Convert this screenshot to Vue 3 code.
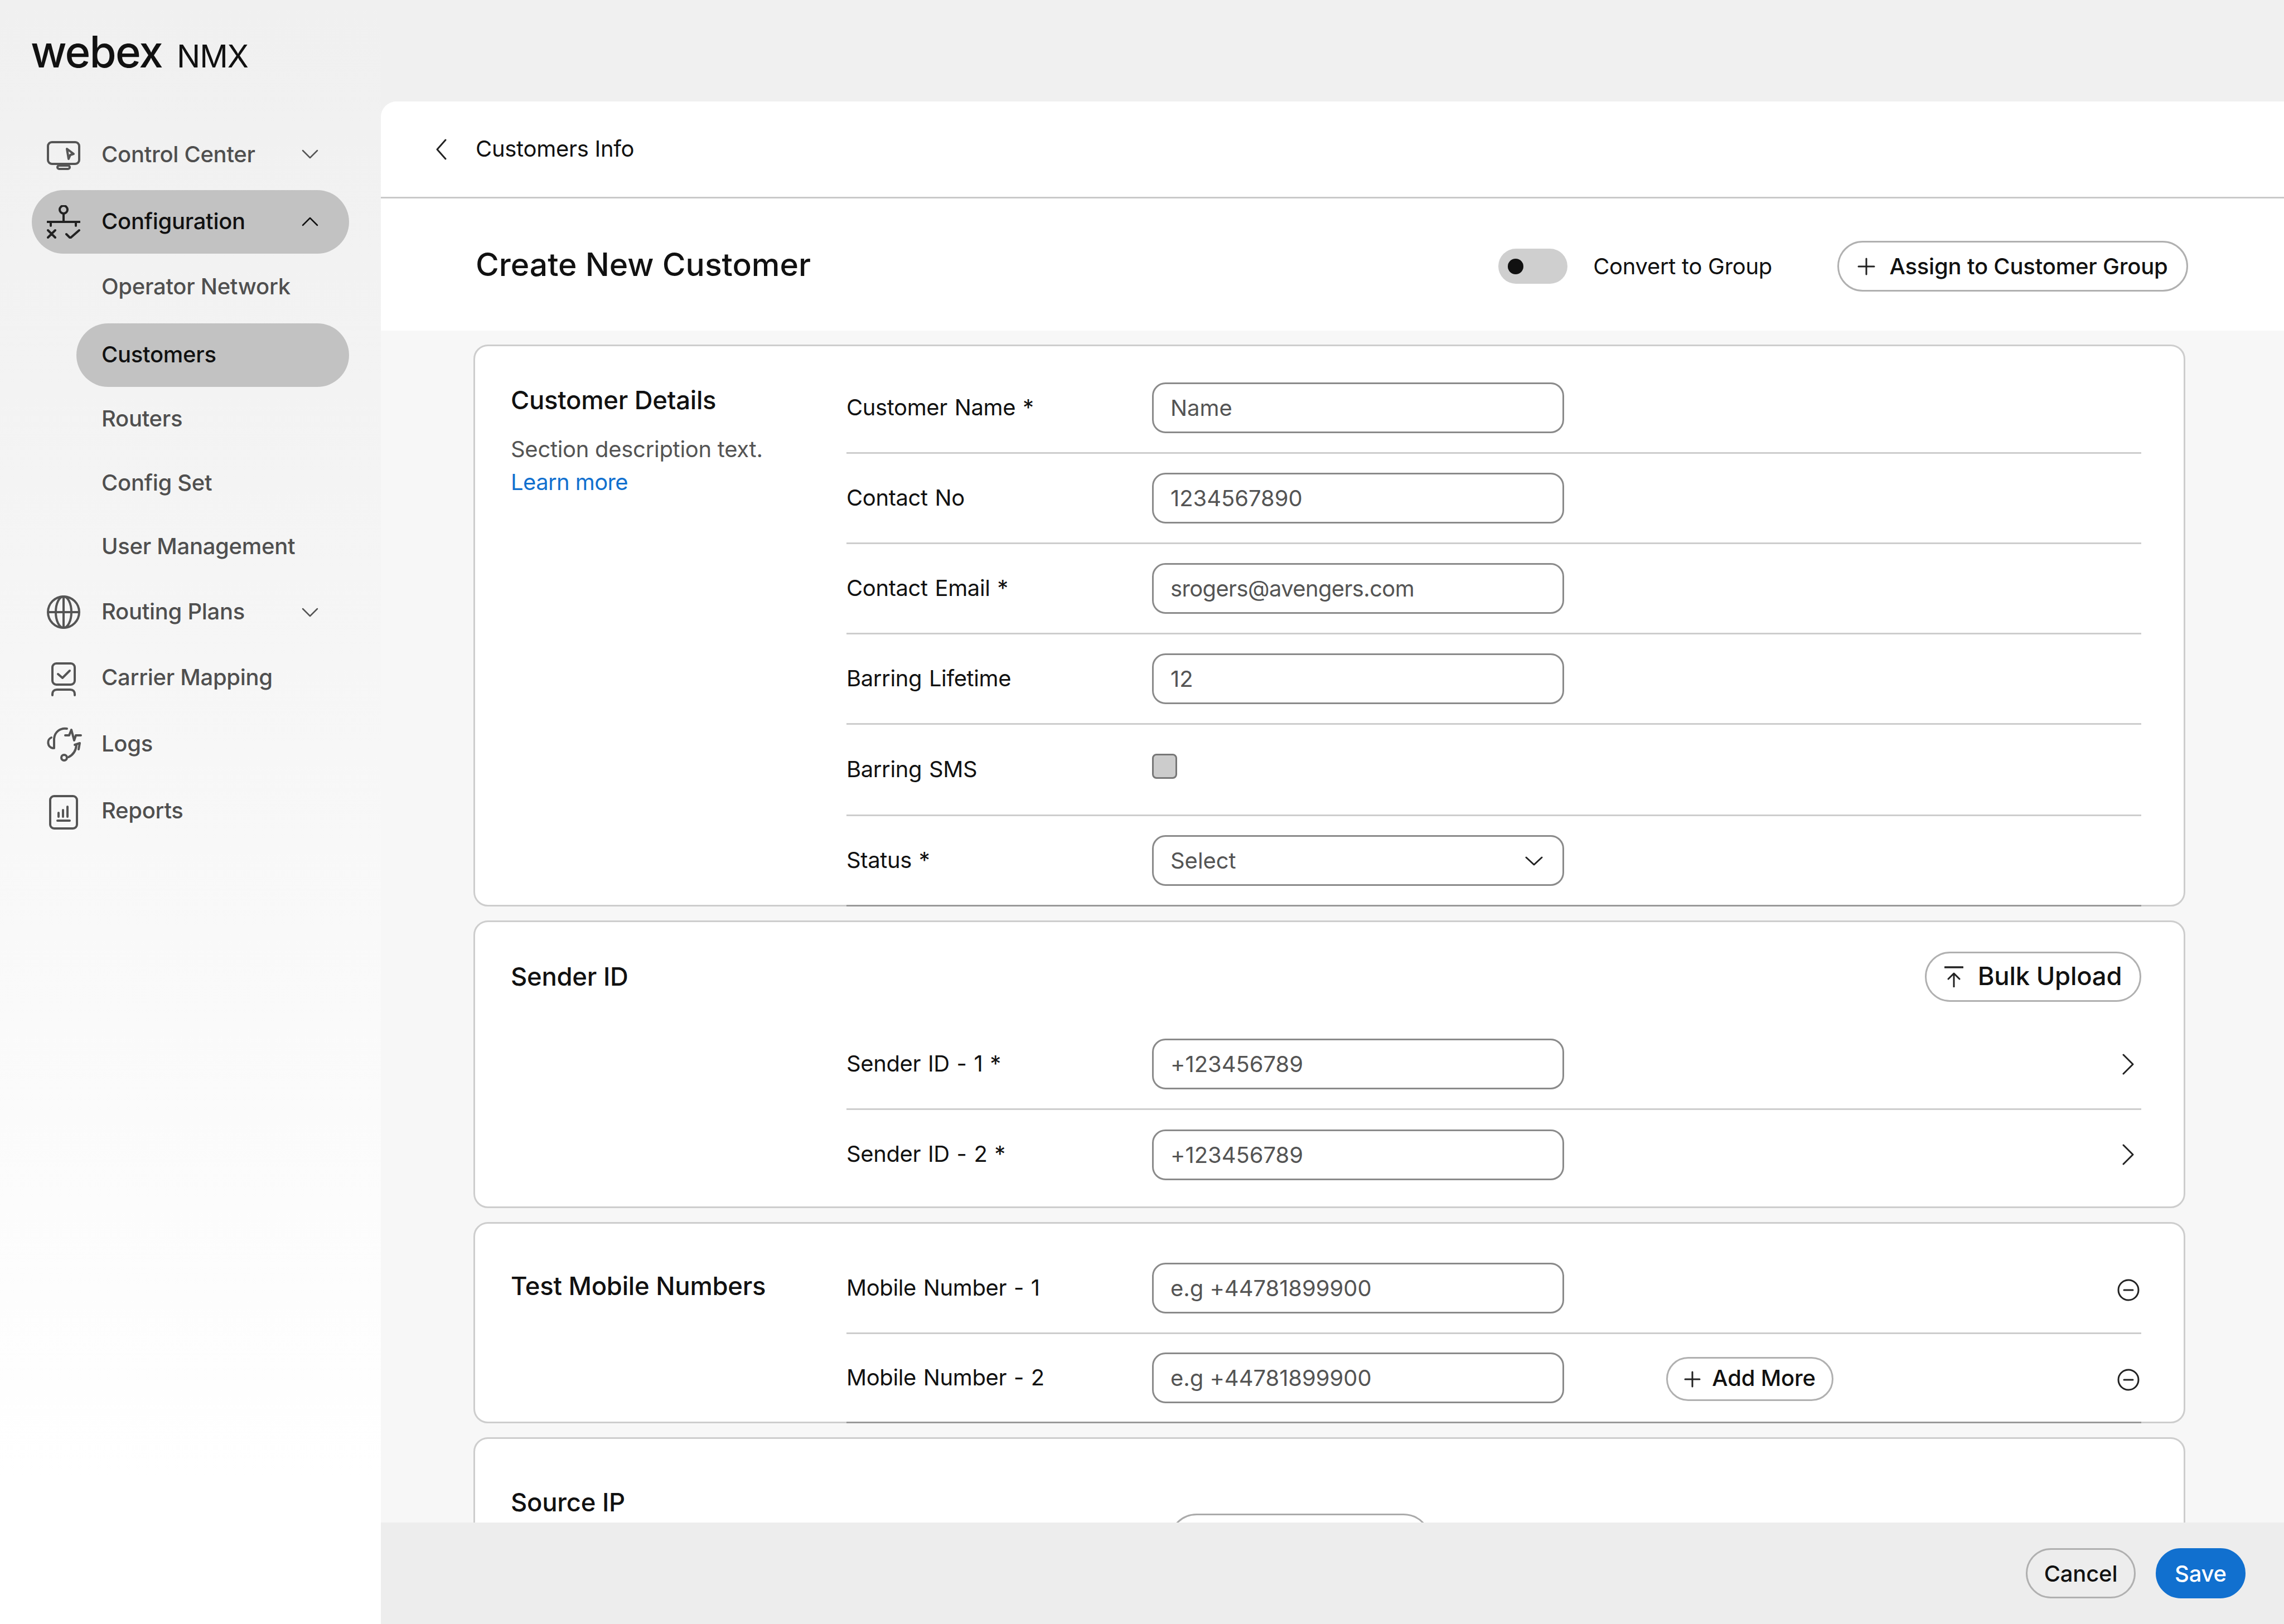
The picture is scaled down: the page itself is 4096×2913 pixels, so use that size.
<script setup>
const nav = [
  { label: 'Control Center', icon: 'monitor', chev: 'down', mt: 0 },
  { label: 'Configuration', icon: 'config', chev: 'up', active: true, mt: 8 },
  { label: 'Operator Network', sub: true, mt: 3 },
  { label: 'Customers', sub: true, active: true, mt: 8 },
  { label: 'Routers', sub: true, mt: 1 },
  { label: 'Config Set', sub: true, mt: 1 },
  { label: 'User Management', sub: true, mt: 0 },
  { label: 'Routing Plans', icon: 'globe', chev: 'down', mt: 3 },
  { label: 'Carrier Mapping', icon: 'carrier', mt: 4 },
  { label: 'Logs', icon: 'logs', mt: 5 },
  { label: 'Reports', icon: 'reports', mt: 6 }
]
const details = [
  { label: 'Customer Name *', value: 'Name' },
  { label: 'Contact No', value: '1234567890' },
  { label: 'Contact Email *', value: 'srogers@avengers.com', tight: true },
  { label: 'Barring Lifetime', value: '12' }
]
const senders = ['Sender ID - 1 *', 'Sender ID - 2 *']
</script>

<template>
  <div class="app">
    <aside class="side">
      <div class="logo"><span class="webex">webex</span><span class="nmx">NMX</span></div>
      <nav class="nav">
        <div
          v-for="item in nav"
          :key="item.label"
          class="item"
          :class="{ sub: item.sub, active: item.active }"
          :style="{ marginTop: item.mt + 'px' }"
        >
          <span v-if="!item.sub" class="ico">
            <svg v-if="item.icon === 'monitor'" width="60" height="60" viewBox="0 0 60 60" fill="none" stroke="#555" stroke-width="4" stroke-linejoin="round" stroke-linecap="round">
              <rect x="2" y="9" width="56" height="39" rx="7" />
              <rect x="19" y="51" width="22" height="6" rx="3" />
              <path d="M36 21l12 9-6 2-3 7z" />
            </svg>
            <svg v-else-if="item.icon === 'config'" width="60" height="60" viewBox="0 0 60 60" fill="none" stroke="#222" stroke-width="4" stroke-linecap="round" stroke-linejoin="round">
              <circle cx="30" cy="8" r="7" />
              <path d="M30 15v15M1 30h58M7 30v7M52 30v7" />
              <path d="M2 45l13 13M15 45L2 58M35 52l7 7 16-14" />
            </svg>
            <svg v-else-if="item.icon === 'globe'" width="60" height="60" viewBox="0 0 60 60" fill="none" stroke="#555" stroke-width="4">
              <circle cx="30" cy="30" r="28" />
              <ellipse cx="30" cy="30" rx="14" ry="28" />
              <path d="M30 2v56M2 30h56" />
            </svg>
            <svg v-else-if="item.icon === 'carrier'" class="over" width="60" height="60" viewBox="0 0 60 60" fill="none" stroke="#555" stroke-width="4" stroke-linecap="round" stroke-linejoin="round">
              <rect x="10" y="4" width="40" height="38" rx="7" />
              <path d="M20 23l8 7 13-13" />
              <path d="M10 61v-2c0-5 3-8 8-8h24c5 0 8 3 8 8v2" />
            </svg>
            <svg v-else-if="item.icon === 'logs'" class="over" width="62" height="60" viewBox="0 0 62 60" fill="none" stroke="#555" stroke-width="4" stroke-linecap="round" stroke-linejoin="round">
              <path d="M36 2C24 0 14 8 13 20v17" />
              <path d="M8 18C0 21 0 35 11 37" />
              <path d="M33 14h7l4-10 5 19 3-9h9" />
              <path d="M53 32c-1 9-6 17-14 21" />
              <path d="M50 31l9-3-2 11" />
              <circle cx="31" cy="54" r="5" />
            </svg>
            <svg v-else-if="item.icon === 'reports'" class="over" width="60" height="60" viewBox="0 0 60 60" fill="none" stroke="#555" stroke-width="4" stroke-linecap="round" stroke-linejoin="round">
              <rect x="6" y="3" width="48" height="58" rx="7" />
              <path d="M21 33v7M29 28v12M37 22v18M19 47h22" />
            </svg>
          </span>
          <span class="lbl">{{ item.label }}</span>
          <svg v-if="item.chev" class="chev" width="30" height="18" viewBox="0 0 30 18" fill="none" stroke-width="2.5" stroke-linecap="round" stroke-linejoin="round">
            <path :d="item.chev === 'down' ? 'M2 3l13 13L28 3' : 'M2 15L15 2l13 13'" />
          </svg>
        </div>
      </nav>
    </aside>

    <main class="main">
      <div class="crumb">
        <svg width="20" height="38" viewBox="0 0 20 38" fill="none" stroke="#222" stroke-width="3" stroke-linecap="round" stroke-linejoin="round"><path d="M18 2L3 19l15 17" /></svg>
        <span class="crumb-txt">Customers Info</span>
      </div>
      <div class="head">
        <h1 class="title">Create New Customer</h1>
        <div class="toggle"><span class="knob"></span></div>
        <span class="toggle-lbl">Convert to Group</span>
        <button class="pill assign">
          <svg width="32" height="32" viewBox="0 0 32 32" stroke="#222" stroke-width="3" stroke-linecap="round"><path d="M16 2v28M2 16h28" /></svg>
          <span>Assign to Customer Group</span>
        </button>
      </div>

      <div class="scroll">
        <section class="card c1">
          <div class="left">
            <h2 class="ctitle">Customer Details</h2>
            <p class="desc">Section description text.</p>
            <a class="more">Learn more</a>
          </div>
          <div class="rows">
            <div v-for="r in details" :key="r.label" class="row">
              <span class="label">{{ r.label }}</span>
              <div class="input" :class="{ tight: r.tight }">{{ r.value }}</div>
            </div>
            <div class="row tall">
              <span class="label">Barring SMS</span>
              <span class="check"></span>
            </div>
            <div class="row last">
              <span class="label">Status *</span>
              <div class="input select">
                <span>Select</span>
                <svg width="32" height="18" viewBox="0 0 32 18" fill="none" stroke="#222" stroke-width="3" stroke-linecap="round" stroke-linejoin="round"><path d="M2 3l14 13L30 3" /></svg>
              </div>
            </div>
          </div>
        </section>

        <section class="card c2">
          <div class="c2-head">
            <h2 class="ctitle">Sender ID</h2>
            <button class="pill bulk">
              <svg width="34" height="38" viewBox="0 0 34 38" fill="none" stroke="#222" stroke-width="3" stroke-linecap="round" stroke-linejoin="round"><path d="M1 2h32" stroke-width="3.5" /><path d="M17 37V13M7 23l10-10 10 10" /></svg>
              <span>Bulk Upload</span>
            </button>
          </div>
          <div class="rows indent">
            <div v-for="(s, i) in senders" :key="s" class="row" :class="{ plain: i === 1 }">
              <span class="label">{{ s }}</span>
              <div class="input">+123456789</div>
              <svg class="tail-chev" width="22" height="38" viewBox="0 0 22 38" fill="none" stroke="#222" stroke-width="3" stroke-linecap="round" stroke-linejoin="round"><path d="M2 2l17 17L2 36" /></svg>
            </div>
          </div>
        </section>

        <section class="card c3">
          <div class="left"><h2 class="ctitle">Test Mobile Numbers</h2></div>
          <div class="rows">
            <div class="row">
              <span class="label">Mobile Number - 1</span>
              <div class="input">e.g +44781899900</div>
              <svg class="minus" width="40" height="40" viewBox="0 0 40 40" fill="none" stroke="#222" stroke-width="3" stroke-linecap="round"><circle cx="20" cy="20" r="18" /><path d="M12 20h16" /></svg>
            </div>
            <div class="row last short">
              <span class="label">Mobile Number - 2</span>
              <div class="input">e.g +44781899900</div>
              <button class="pill add">
                <svg width="30" height="30" viewBox="0 0 30 30" stroke="#222" stroke-width="3" stroke-linecap="round"><path d="M15 2v26M2 15h26" /></svg>
                <span>Add More</span>
              </button>
              <svg class="minus" width="40" height="40" viewBox="0 0 40 40" fill="none" stroke="#222" stroke-width="3" stroke-linecap="round"><circle cx="20" cy="20" r="18" /><path d="M12 20h16" /></svg>
            </div>
          </div>
        </section>

        <section class="card c4">
          <div class="left"><h2 class="ctitle">Source IP</h2></div>
          <div class="ghost"></div>
        </section>
      </div>

      <footer class="foot">
        <button class="pill cancel">Cancel</button>
        <button class="pill save">Save</button>
      </footer>
    </main>
  </div>
</template>

<style scoped>
* { box-sizing: border-box; }
.app {
  display: flex;
  width: 4096px;
  height: 2913px;
  overflow: hidden;
  background: #f0f0f0;
  font-family: Inter, "Liberation Sans", sans-serif;
  color: #111;
  letter-spacing: -0.3px;
}
.side {
  width: 683px;
  flex: none;
  padding-left: 57px;
  background: linear-gradient(#f0f0f0 0, #f3f3f3 700px, #ffffff 2650px);
}
.logo {
  height: 219px;
  padding-top: 48px;
  display: flex;
  align-items: baseline;
  line-height: 90px;
  color: #111;
  margin-left: -2px;
}
.webex { font-size: 78px; font-weight: 550; letter-spacing: -1.8px; }
.nmx { font-size: 56px; margin-left: 26px; letter-spacing: -1px; }
.item {
  width: 569px;
  height: 114px;
  display: flex;
  align-items: center;
  padding: 0 55px 0 27px;
  border-radius: 57px;
  font-size: 40px;
  font-weight: 500;
  color: #4f4f4f;
  stroke: #555;
}
.item.active { background: #c2c2c2; color: #111; stroke: #111; }
.item.sub { width: 489px; margin-left: 80px; padding-left: 45px; }
.ico { width: 60px; height: 60px; margin-right: 38px; display: flex; flex: none; }
.over { overflow: visible; }
.lbl { margin-top: -3px; }
.item:first-child .lbl { margin-top: 0; }
.chev { margin-left: auto; }
.main {
  flex: 1;
  height: 2731px;
  margin-top: 182px;
  display: flex;
  flex-direction: column;
  background: #f7f7f7;
  border-top-left-radius: 28px;
  overflow: hidden;
}
.crumb {
  height: 174px;
  flex: none;
  display: flex;
  align-items: center;
  padding-left: 98px;
  background: #fff;
  border-bottom: 3px solid #c9c9c9;
}
.crumb-txt { margin: -2px 0 0 52px; font-size: 40px; color: #111; }
.head {
  height: 237px;
  flex: none;
  display: flex;
  align-items: center;
  padding: 0 172px 0 170px;
  background: #fff;
}
.title { margin: 0 auto 0 0; font-size: 57px; font-weight: 500; letter-spacing: 0; }
.toggle {
  width: 124px;
  height: 63px;
  margin-top: 6px;
  border-radius: 32px;
  background: #cfcfcf;
  display: flex;
  align-items: center;
  padding-left: 17px;
}
.knob { width: 28px; height: 28px; border-radius: 50%; background: #111; }
.toggle-lbl { margin: 6px 117px 0 46px; font-size: 40px; }
.pill {
  display: inline-flex;
  align-items: center;
  justify-content: center;
  border: 3px solid #b0b0b0;
  border-radius: 999px;
  background: transparent;
  font-family: inherit;
  font-weight: 500;
  color: #111;
  padding: 0;
  letter-spacing: -0.2px;
}
.assign { width: 629px; height: 91px; gap: 25px; font-size: 40px; margin-top: 6px; }
.scroll { flex: 1; min-height: 0; overflow: hidden; padding: 25px 177px 0 166px; }
.card {
  display: grid;
  grid-template-columns: 602px 1fr;
  border: 3px solid #cdcdcd;
  border-radius: 26px;
  background: #fff;
  padding: 0 76px 0 64px;
  margin-bottom: 25px;
}
.c1 { padding-top: 31px; height: 1008px; }
.c1 .left { padding-top: 38px; }
.ctitle { margin: 0; font-size: 45.4px; line-height: 56px; font-weight: 500; color: #111; letter-spacing: -0.25px; }
.desc { margin: 30px 0 0; font-size: 40px; line-height: 59px; color: #545454; }
.more { display: block; font-size: 40px; line-height: 59px; color: #1170cf; letter-spacing: -0.6px; }
.row {
  height: 162px;
  display: flex;
  align-items: center;
  border-bottom: 3px solid #cdcdcd;
}
.row.tall { height: 164px; }
.row.last { border-bottom-color: #999; margin-bottom: -3px; }
.row.plain { border-bottom: 0; height: 160px; }
.row.short { height: 160px; }
.label { width: 548px; margin-top: -3px; flex: none; font-size: 40px; color: #111; letter-spacing: -0.4px; word-spacing: 2px; }
.input {
  width: 739px;
  height: 91px;
  flex: none;
  display: flex;
  align-items: center;
  justify-content: space-between;
  padding: 0 35px 0 30px;
  border: 3px solid #8a8a8a;
  border-radius: 24px;
  font-size: 40px;
  color: #545454;
  letter-spacing: -0.05px;
}
.input.tight { letter-spacing: -0.65px; }
.check {
  width: 45px;
  height: 45px;
  margin: 0 0 12px 0;
  border: 3px solid #777;
  border-radius: 8px;
  background: #ccc;
}
.c2 { display: block; height: 516px; padding-top: 53px; }
.c2-head { display: flex; align-items: center; justify-content: space-between; margin-bottom: 32px; }
.bulk { width: 388px; height: 90px; gap: 26px; font-size: 45.4px; }
.bulk span { margin-top: -3px; }
.indent { margin-left: 602px; }
.tail-chev { margin: 0 12px 0 auto; }
.c3 { height: 361px; padding-top: 36px; }
.c3 .left { padding-top: 48px; }
.minus { margin: 6px 3px 0 auto; }
.add { width: 300px; height: 79px; gap: 20px; margin: 4px 0 0 183px; font-size: 40px; }
.add span { margin-top: -4px; }
.c4 { height: 400px; grid-template-columns: 1180px 1fr; }
.c4 .left { padding-top: 86px; }
.ghost {
  width: 471px;
  height: 100px;
  margin-top: 134px;
  border: 3px solid #aaa;
  border-radius: 50px;
}
.foot {
  height: 182px;
  flex: none;
  display: flex;
  align-items: center;
  justify-content: flex-end;
  gap: 36px;
  padding-right: 69px;
  background: #ededed;
}
.cancel { width: 197px; height: 90px; font-size: 40px; }
.save { width: 161px; height: 90px; font-size: 40px; background: #1170cf; border-color: #1170cf; color: #fff; }
</style>
